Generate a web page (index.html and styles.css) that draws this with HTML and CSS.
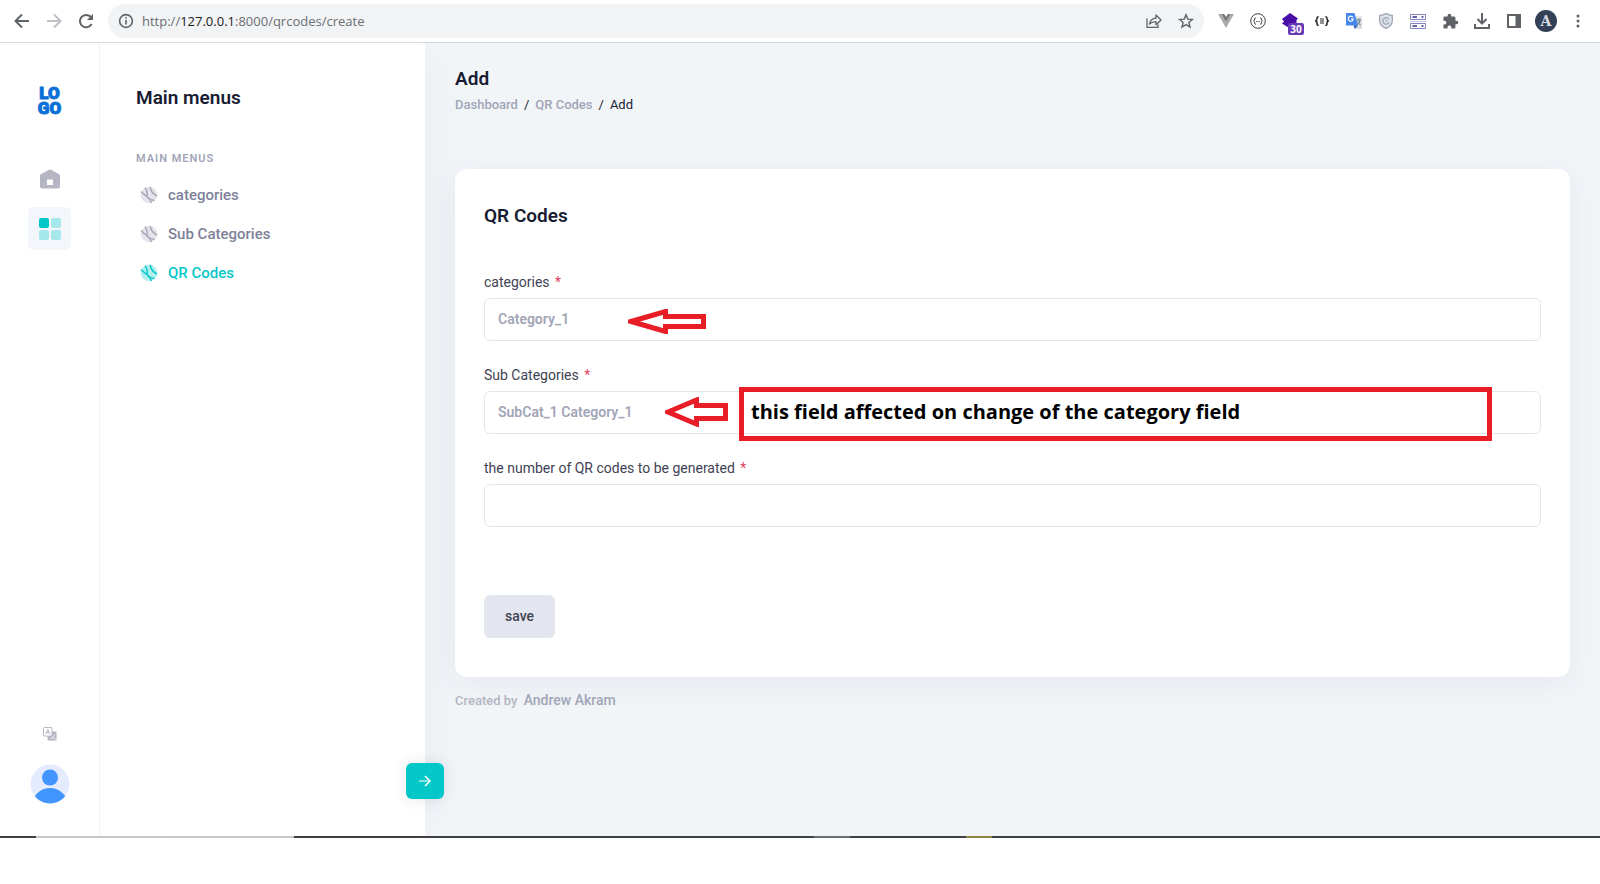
FILE: index.html
```html
<!DOCTYPE html>
<html lang="en">
<head>
<meta charset="utf-8">
<title>Add QR Codes</title>
<link rel="stylesheet" href="styles.css">
</head>
<body>
<svg class="defs" aria-hidden="true">
  <symbol id="ball" viewBox="0 0 18 18">
    <circle cx="9" cy="9" r="8.3" fill="currentColor" opacity=".3"/>
    <g fill="none" stroke="currentColor" stroke-width="1.5">
      <path d="M1 5.500 Q4.500 9 7.500 11 Q10 13 11.500 17"/>
      <path d="M5 1.800 Q7.800 5 7 10.500"/>
      <path d="M10 1 Q11 4.500 12.500 6.500 T17 10"/>
      <path d="M7.500 11.500 Q11 14.500 14.500 14.500"/>
    </g>
  </symbol>
</svg>

<header class="browser">
  <nav class="nav" aria-label="Navigation">
    <button class="cell" aria-label="Back"><svg width="16" height="16" viewBox="0 0 16 16" fill="none" stroke="#5f6368" stroke-width="2"><path d="M15 8H2M8 1.5 1.5 8 8 14.5"/></svg></button>
    <button class="cell" aria-label="Forward"><svg width="16" height="16" viewBox="0 0 16 16" fill="none" stroke="#bdc1c6" stroke-width="2"><path d="M1 8H14M8 1.5 14.5 8 8 14.5"/></svg></button>
    <button class="cell" aria-label="Reload"><svg width="16" height="16" viewBox="0 0 16 16"><path d="M13.6 11A6.2 6.2 0 1 1 12.6 3.8" fill="none" stroke="#5f6368" stroke-width="2"/><path d="M15 1V7H9z" fill="#5f6368"/></svg></button>
  </nav>
  <div class="omnibox">
    <svg width="16" height="16" viewBox="0 0 16 16" fill="none" stroke="#5f6368" stroke-width="1.6"><circle cx="8" cy="8" r="6.4"/><path d="M8 7v4.4M8 4.2v1.6"/></svg>
    <span class="url">http://<b>127.0.0.1</b>:8000/qrcodes/create</span>
    <button class="cell" aria-label="Share"><svg width="16" height="16" viewBox="0 0 16 16" fill="none" stroke="#5f6368" stroke-width="1.3"><path d="M1 5.5V14.4H12V11.5"/><path d="M3.5 11Q4.5 5.6 10 5.2V2L15 7 10 11.8V8.6Q6 8.6 3.5 11z" stroke-linejoin="round"/></svg></button>
    <button class="cell" aria-label="Bookmark"><svg width="16" height="16" viewBox="0 0 16 16" fill="none" stroke="#5f6368" stroke-width="1.4"><path d="M8 1.8 9.8 6.1 14.4 6.5 10.9 9.5 12 14 8 11.6 4 14 5.1 9.5 1.6 6.5 6.2 6.1z"/></svg></button>
  </div>
  <div class="extensions">
    <button class="cell" aria-label="Vue"><svg width="16" height="14" viewBox="0 0 16 14"><path d="M0 0H3.4L8 8 12.6 0H16L8 14z" fill="#aaa"/><path d="M3.4 0H6.2L8 3 9.8 0H12.6L8 8z" fill="#777"/></svg></button>
    <button class="cell" aria-label="Code"><svg width="16" height="16" viewBox="0 0 16 16" fill="none" stroke="#444" stroke-width="1"><circle cx="8" cy="8" r="7.3"/><path d="M5.8 4.800Q4.600 4.800 4.600 6T3.600 8Q4.600 8 4.600 9.800T5.800 11.200M10.200 4.800Q11.400 4.800 11.400 6T12.400 8Q11.400 8 11.400 9.800T10.200 11.200"/><path d="M6.200 8.500H7M7.600 8.500H8.400M9 8.500H9.800"/></svg></button>
    <button class="cell" aria-label="Layers"><svg width="18" height="16" viewBox="0 0 18 16" fill="#4a0fa8"><path d="M9 0 17 5.500 15.500 7V10.500L9 15.500 1 10.500 3 8.500 1 6z"/></svg><span class="badge">30</span></button>
    <button class="cell" aria-label="JSON"><svg width="14" height="10" viewBox="0 0 14 10" fill="none" stroke="#222" stroke-width="1.5"><path d="M3.600.8Q2 .8 2 2.400T.6 5Q2 5 2 7.400T3.600 9.200M10.400.8Q12 .8 12 2.400T13.400 5Q12 5 12 7.400T10.400 9.200"/><path d="M5 3H9M5 5H9M5 7H9" stroke-width="1"/></svg></button>
    <button class="cell" aria-label="Translate"><svg width="16" height="16" viewBox="0 0 16 16"><path d="M6 3.5H16V16H8.5z" fill="#d9dce0"/><path d="M0 0H8.5L12 12.5H0z" fill="#4787ed"/><path d="M7.5 12.5H12L8.8 16z" fill="#2f5fc4"/><path d="M6.8 4.3A2.5 2.5 0 1 0 7.2 6.2H5" fill="none" stroke="#fff" stroke-width="1.2"/><path d="M10.5 7H15M12.7 5.6V7M14 7Q13.5 10 11.5 11.8M11.5 8.5Q12.5 11 14.8 12" fill="none" stroke="#607d8b"/></svg></button>
    <button class="cell" aria-label="Shield"><svg width="14" height="16" viewBox="0 0 14 16"><path d="M7 .6Q10 2.4 13.3 2.4V8Q13 13 7 15.4Q1 13 .7 8V2.4Q4 2.4 7 .6z" fill="#dfe3e9" stroke="#9aa3b2" stroke-width="1.2"/><path d="M9.8 6.2A3.2 3.2 0 1 0 10 9.4" fill="none" stroke="#a5b0c4" stroke-width="1.6"/><circle cx="7.4" cy="7.8" r="1.3" fill="#b9c2d2"/></svg></button>
    <button class="cell" aria-label="Servers"><svg width="16" height="15" viewBox="0 0 16 15" fill="none" stroke="#8583bd" stroke-width="1"><path d="M.5.5H15.5V5.5H.5zM.5 9.5H15.5V14.5H.5z"/><path d="M0 7.500H16" stroke="#c3c2e0"/><path d="M2.500 3H7M11.500 3H13.500M2.500 12H7M11.500 12H13.500" stroke="#332f91" stroke-width="1.500"/></svg></button>
    <button class="cell" aria-label="Extensions"><svg width="17" height="17" viewBox="0 0 24 24" fill="#5f6368"><path d="M20.5 11H19V7a2 2 0 0 0-2-2h-4V3.500a2.500 2.500 0 0 0-5 0V5H4a2 2 0 0 0-2 2v3.800h1.500a2.700 2.700 0 0 1 0 5.400H2V20a2 2 0 0 0 2 2h3.800v-1.500a2.700 2.700 0 0 1 5.400 0V22H17a2 2 0 0 0 2-2v-4h1.500a2.500 2.500 0 0 0 0-5z"/></svg></button>
    <button class="cell" aria-label="Downloads"><svg width="16" height="16" viewBox="0 0 16 16" fill="none" stroke="#5f6368" stroke-width="2"><path d="M8 0V10M3.500 6 8 10.500 12.500 6M1 11V15H15V11"/></svg></button>
    <button class="cell" aria-label="Side panel"><svg width="14" height="14" viewBox="0 0 14 14"><path d="M1 1H13V13H1z" fill="none" stroke="#5f6368" stroke-width="2"/><path d="M8.500 1H13V13H8.500z" fill="#5f6368"/></svg></button>
    <button class="cell" aria-label="Profile"><span class="profile">A</span></button>
    <button class="cell" aria-label="Menu"><svg width="4" height="14" viewBox="0 0 4 14" fill="#5f6368"><circle cx="2" cy="2" r="1.500"/><circle cx="2" cy="7" r="1.500"/><circle cx="2" cy="12" r="1.500"/></svg></button>
  </div>
</header>

<div class="app">
  <aside class="rail">
    <a class="logo" href="#">LO<br>GO</a>
    <a class="rail-item" href="#" aria-label="Home"><svg width="20" height="20" viewBox="0 0 20 20"><path fill-rule="evenodd" d="M9 .8Q10 .2 11 .8L18.800 5Q20 5.700 20 7V17.500Q20 19.500 18 19.500H2Q0 19.500 0 17.500V7Q0 5.700 1.200 5zM7 10.500V16H13V10.500z" fill="#b5b5c3"/></svg></a>
    <a class="rail-item active" href="#" aria-label="Main menus"><svg width="22" height="22" viewBox="0 0 22 22" fill="#04c8c8"><rect width="10" height="10" rx="2"/><g opacity=".32"><rect x="12" width="10" height="10" rx="2"/><rect y="12" width="10" height="10" rx="2"/><rect x="12" y="12" width="10" height="10" rx="2"/></g></svg></a>
    <div class="rail-bottom">
      <button class="lang" aria-label="Language"><svg width="14" height="14" viewBox="0 0 14 14"><rect x="4.500" y="4.500" width="9" height="9" rx="1" fill="#b5b5c3"/><path d="M7.500 12Q10.500 11 11.500 7.500M9.500 10Q10.500 11.500 12.500 12" stroke="#fff" fill="none" stroke-width=".8"/><rect x=".5" y=".5" width="8.500" height="8.500" rx="1" fill="#fff" stroke="#b5b5c3"/><path d="M3 7 4.750 2.600 6.500 7M3.600 5.600H5.900" fill="none" stroke="#b5b5c3"/></svg></button>
      <button class="avatar" aria-label="Account"><svg width="40" height="40" viewBox="0 0 40 40"><defs><clipPath id="face"><circle cx="20" cy="20" r="19.500"/></clipPath></defs><g clip-path="url(#face)"><rect width="40" height="40" fill="#e4ebff"/><circle cx="20" cy="13.500" r="8" fill="#4294ff"/><circle cx="20" cy="42" r="18" fill="#4294ff"/></g></svg></button>
    </div>
  </aside>

  <aside class="panel">
    <h2 class="heading">Main menus</h2>
    <p class="panel-label">MAIN MENUS</p>
    <nav class="menu">
      <a href="#"><svg width="18" height="18"><use href="#ball"/></svg>categories</a>
      <a href="#"><svg width="18" height="18"><use href="#ball"/></svg>Sub Categories</a>
      <a class="current" href="#"><svg width="18" height="18"><use href="#ball"/></svg>QR Codes</a>
    </nav>
    <button class="toggle" aria-label="Toggle menu"><svg width="12" height="12" viewBox="0 0 12 12" fill="none" stroke="#fff" stroke-width="1.500"><path d="M0 6H10" opacity=".7"/><path d="M6 1 11 6 6 11"/></svg></button>
  </aside>

  <main class="main">
    <h1 class="heading">Add</h1>
    <nav class="crumbs" aria-label="Breadcrumb"><a href="#">Dashboard</a><span>/</span><a href="#">QR Codes</a><span>/</span><span>Add</span></nav>
    <form class="card">
      <h2 class="heading">QR Codes</h2>
      <div class="fields">
        <div class="field">
          <label for="category">categories <i>*</i></label>
          <select id="category" class="control"><option>Category_1</option></select>
          <svg class="arrow arrow-category" width="78" height="25" viewBox="0 0 78 25"><path d="M3 12.500 37.500 2.500V7.500H75.500V17.500H37.500V22.500z"/></svg>
        </div>
        <div class="field">
          <label for="subcategory">Sub Categories <i>*</i></label>
          <select id="subcategory" class="control"><option>SubCat_1 Category_1</option></select>
          <svg class="arrow arrow-subcategory" width="63" height="30" viewBox="0 0 63 30"><path d="M3 15 31.500 3V8.500H60.500V21.500H31.500V27z"/></svg>
          <p class="note">this field affected on change of the category field</p>
        </div>
        <div class="field">
          <label for="count">the number of QR codes to be generated <i>*</i></label>
          <input id="count" class="control" type="text">
        </div>
      </div>
      <button class="save" type="button">save</button>
    </form>
    <footer class="credit">Created by <a href="#">Andrew Akram</a></footer>
  </main>
</div>
<div class="edge"></div>
</body>
</html>
```
FILE: styles.css
```css
* { box-sizing: border-box; }

body {
  margin: 0;
  min-height: 100vh;
  display: flex;
  flex-direction: column;
  padding-bottom: 46px;
  background: #fff;
  color: #181c32;
  font-family: Roboto, "Liberation Sans", sans-serif;
  font-size: 14px;
  line-height: 20px;
}

h1, h2, p { margin: 0; }
a { color: inherit; text-decoration: none; }
button { border: 0; padding: 0; background: none; font: inherit; color: inherit; }
svg { display: block; flex: none; }
.defs { position: absolute; width: 0; height: 0; }
.heading { font-size: 19px; font-weight: 600; line-height: 24px; }

/* Browser toolbar */
.browser {
  display: flex;
  align-items: center;
  height: 43px;
  padding: 0 6px;
  border-bottom: 1px solid #d9dadc;
}
.nav, .extensions { display: flex; }
.cell {
  position: relative;
  display: flex;
  align-items: center;
  justify-content: center;
  width: 32px;
  height: 32px;
}
.omnibox {
  flex: 1;
  display: flex;
  align-items: center;
  height: 34px;
  margin: 0 6px;
  padding: 0 2px 0 10px;
  border-radius: 17px;
  background: #f1f3f4;
}
.url {
  flex: 1;
  margin-left: 8px;
  color: #6b6f74;
  font-family: "Open Sans", "Noto Sans", sans-serif;
  font-size: 13px;
}
.url b { color: #202124; font-weight: 400; }
.badge {
  position: absolute;
  right: 2px;
  bottom: 2px;
  width: 16px;
  border-radius: 2px;
  background: #673ab7;
  color: #fff;
  font: 700 10px/12px "Open Sans", sans-serif;
}
.profile {
  width: 22px;
  border-radius: 50%;
  background: #344055;
  color: #d5d9e0;
  font: 700 14px/22px "DejaVu Serif", serif;
}

/* Icon rail */
.app { flex: 1; display: flex; }
.rail {
  width: 100px;
  display: flex;
  flex-direction: column;
  align-items: center;
  padding: 43px 0 32px;
  border-right: 1px solid #eff0f4;
}
.logo {
  margin-bottom: 41px;
  color: #0b6fd8;
  font: 900 17px/15px Roboto, sans-serif;
  -webkit-text-stroke: 1px #0b6fd8;
  text-align: center;
}
.rail-item {
  display: flex;
  align-items: center;
  justify-content: center;
  width: 43px;
  height: 43px;
  margin-bottom: 6px;
  border-radius: 6px;
}
.rail-item.active { margin-top: 1px; background: #f3f6fb; }
.rail-bottom {
  display: flex;
  flex-direction: column;
  align-items: center;
  gap: 23px;
  margin-top: auto;
}

/* Menu panel */
.panel {
  position: relative;
  z-index: 1;
  width: 325px;
  padding: 43px 36px;
  background: #fff;
  box-shadow: 28px 0 28px -14px rgba(82, 63, 105, .03);
}
.panel-label {
  margin-top: 39px;
  color: #a1a5b7;
  font-size: 11px;
  font-weight: 600;
  letter-spacing: 1px;
}
.menu { display: flex; flex-direction: column; margin-top: 6px; }
.menu a {
  display: flex;
  align-items: center;
  gap: 10px;
  height: 39px;
  padding-left: 4px;
  color: #7e8299;
  font-size: 15px;
  font-weight: 500;
}
.menu svg { color: #a7a7b9; }
.menu .current, .menu .current svg { color: #04c8c8; }
.toggle {
  position: absolute;
  right: -19px;
  bottom: 37px;
  display: flex;
  align-items: center;
  justify-content: center;
  width: 38px;
  height: 36px;
  border-radius: 6px;
  background: #04c8c8;
  box-shadow: 0 0 14px rgba(82, 63, 105, .14);
}

/* Page content */
.main { flex: 1; padding: 24px 30px; background: #f1f5f8; }
.crumbs {
  display: flex;
  gap: 6px;
  margin-top: 4px;
  font-size: 13px;
}
.crumbs a { color: #a1a5b7; font-weight: 500; }
.card {
  margin-top: 54px;
  padding: 35px 29px 39px;
  border-radius: 12px;
  background: #fff;
  box-shadow: 0 6px 32px rgba(82, 63, 105, .07);
}
.fields {
  display: flex;
  flex-direction: column;
  gap: 24px;
  margin-top: 44px;
}
.field { position: relative; display: flex; flex-direction: column; gap: 6px; }
.field label { color: #3f4254; }
.field i { margin-left: 2px; color: #e0435f; font-style: normal; }
.control {
  appearance: none;
  width: 100%;
  height: 43px;
  padding: 0 13px 2px;
  border: 1px solid #e4e6ef;
  border-radius: 6px;
  background: #fff;
  color: #a1a5b7;
  font: 600 14px/20px Roboto, sans-serif;
  opacity: 1;
}
.save {
  margin-top: 68px;
  padding-bottom: 2px;
  width: 71px;
  height: 43px;
  border-radius: 6px;
  background: #e4e6ef;
  color: #3f4254;
  font-weight: 500;
}
.credit { margin-top: 13px; color: #b5b5c3; font-size: 13px; font-weight: 500; }
.credit a { margin-left: 3px; color: #a1a5b7; font-size: 14px; }

/* Hand-drawn annotations over the form */
.arrow { position: absolute; fill: none; stroke: #e91d25; stroke-width: 5px; }
.arrow-category { left: 144px; top: 37px; }
.arrow-subcategory { left: 181px; top: 32px; }
.note {
  position: absolute;
  left: 255px;
  right: 49px;
  top: 22px;
  height: 54px;
  padding: 0 7px;
  border: 5px solid #e91d25;
  color: #000;
  font: 700 20px/40px "Open Sans", "Noto Sans", sans-serif;
}

/* Window edge under the page */
.edge {
  height: 2px;
  background: linear-gradient(90deg,
    #414143 36px, #c8c8c8 36px 294px, #414143 294px 814px,
    #6d6e71 814px 850px, #414143 850px 966px, #8a8446 966px 992px, #414143 992px);
}
```
